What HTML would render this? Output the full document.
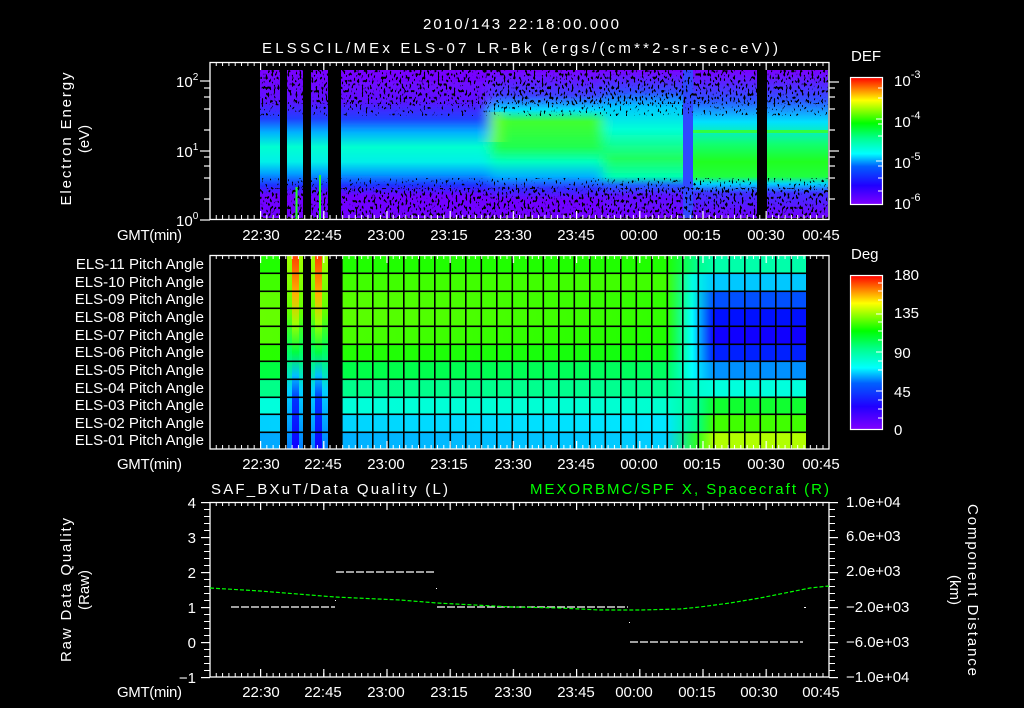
<!DOCTYPE html>
<html><head><meta charset="utf-8"><style>
html,body{margin:0;padding:0;background:#000;}
svg{display:block;}
text{font-family:"Liberation Sans",sans-serif;fill:#fff;font-size:15px;}
</style></head><body>
<svg width="1024" height="708" viewBox="0 0 1024 708" xmlns="http://www.w3.org/2000/svg">
<defs>
<linearGradient id="cb" x1="0" y1="1" x2="0" y2="0">
<stop offset="0" stop-color="#8000ff"/><stop offset="0.15" stop-color="#2000ff"/><stop offset="0.3" stop-color="#0060ff"/><stop offset="0.4" stop-color="#00ffff"/><stop offset="0.52" stop-color="#00ff90"/><stop offset="0.64" stop-color="#00ff00"/><stop offset="0.82" stop-color="#ffff00"/><stop offset="1" stop-color="#ff0000"/>
</linearGradient>
<linearGradient id="gA" gradientUnits="userSpaceOnUse" x1="0" y1="70" x2="0" y2="218">
<stop offset="0" stop-color="#7a00ff"/><stop offset="0.2" stop-color="#6010ff"/><stop offset="0.33" stop-color="#2040ff"/><stop offset="0.42" stop-color="#00b0ff"/><stop offset="0.52" stop-color="#00ffd0"/><stop offset="0.62" stop-color="#00f0e8"/><stop offset="0.7" stop-color="#00a0ff"/><stop offset="0.78" stop-color="#2030ff"/><stop offset="0.85" stop-color="#7000ff"/><stop offset="1" stop-color="#7000ff"/>
</linearGradient>
<linearGradient id="gE" gradientUnits="userSpaceOnUse" x1="0" y1="70" x2="0" y2="218">
<stop offset="0" stop-color="#7a00ff"/><stop offset="0.17" stop-color="#4040ff"/><stop offset="0.27" stop-color="#00e0ff"/><stop offset="0.35" stop-color="#40ff30"/><stop offset="0.52" stop-color="#20ff50"/><stop offset="0.62" stop-color="#00ffc0"/><stop offset="0.72" stop-color="#00b0ff"/><stop offset="0.8" stop-color="#3030ff"/><stop offset="0.88" stop-color="#7000ff"/><stop offset="1" stop-color="#7000ff"/>
</linearGradient>
<linearGradient id="gF" gradientUnits="userSpaceOnUse" x1="0" y1="70" x2="0" y2="218">
<stop offset="0" stop-color="#7a00ff"/><stop offset="0.15" stop-color="#3050ff"/><stop offset="0.25" stop-color="#00c8ff"/><stop offset="0.4" stop-color="#00ffd8"/><stop offset="0.6" stop-color="#20ff60"/><stop offset="0.72" stop-color="#00ffb0"/><stop offset="0.78" stop-color="#2060ff"/><stop offset="0.85" stop-color="#6010ff"/><stop offset="1" stop-color="#7000ff"/>
</linearGradient>
<linearGradient id="gG" gradientUnits="userSpaceOnUse" x1="0" y1="70" x2="0" y2="218">
<stop offset="0" stop-color="#7a00ff"/><stop offset="0.2" stop-color="#3050ff"/><stop offset="0.35" stop-color="#00e0ff"/><stop offset="0.5" stop-color="#10ff70"/><stop offset="0.62" stop-color="#20ff20"/><stop offset="0.72" stop-color="#20ff40"/><stop offset="0.77" stop-color="#00d0ff"/><stop offset="0.83" stop-color="#4030ff"/><stop offset="1" stop-color="#7000ff"/>
</linearGradient>
<filter id="hblur" x="-5%" y="0" width="110%" height="100%"><feGaussianBlur stdDeviation="6 0"/></filter>
<clipPath id="cD"><rect x="341" y="60" width="342" height="160"/></clipPath>
<filter id="spk" x="0" y="0" width="100%" height="100%">
<feTurbulence type="fractalNoise" baseFrequency="0.5 0.3" numOctaves="1" seed="4"/>
<feColorMatrix type="matrix" values="0 0 0 0 0  0 0 0 0 0  0 0 0 0 0  14 0 0 0 -7.9"/>
</filter>
<filter id="spk2" x="0" y="0" width="100%" height="100%">
<feTurbulence type="fractalNoise" baseFrequency="0.5 0.3" numOctaves="1" seed="9"/>
<feColorMatrix type="matrix" values="0 0 0 0 0  0 0 0 0 0  0 0 0 0 0  14 0 0 0 -8.8"/>
</filter>
<pattern id="tmin" x="260" y="0" width="6.32" height="10" patternUnits="userSpaceOnUse"><rect width="1" height="10" fill="#fff"/></pattern>
<pattern id="tmaj" x="260" y="0" width="63.2" height="10" patternUnits="userSpaceOnUse"><rect width="1.2" height="10" fill="#fff"/></pattern>
<pattern id="vmin" x="0" y="502" width="10" height="7" patternUnits="userSpaceOnUse"><rect width="10" height="1" fill="#fff"/></pattern>
<pattern id="vmaj" x="0" y="502" width="12" height="35" patternUnits="userSpaceOnUse"><rect width="12" height="1.2" fill="#fff"/></pattern>
<pattern id="grid" x="341" y="0" width="15.5" height="700" patternUnits="userSpaceOnUse"><rect width="1.6" height="700" fill="#000"/></pattern>
<linearGradient id="r1" gradientUnits="userSpaceOnUse" x1="260" x2="807"><stop offset="0" stop-color="#20ff00"/><stop offset="0.744" stop-color="#20ff00"/><stop offset="0.8" stop-color="#00ff90"/><stop offset="0.83" stop-color="#00ffaa"/><stop offset="1" stop-color="#00ffaa"/></linearGradient>
<linearGradient id="r2" gradientUnits="userSpaceOnUse" x1="260" x2="807"><stop offset="0" stop-color="#40ff00"/><stop offset="0.744" stop-color="#40ff00"/><stop offset="0.79" stop-color="#00ffe0"/><stop offset="0.83" stop-color="#00c8ff"/><stop offset="1" stop-color="#00c8ff"/></linearGradient>
<linearGradient id="r3" gradientUnits="userSpaceOnUse" x1="260" x2="807"><stop offset="0" stop-color="#60ff00"/><stop offset="0.744" stop-color="#30ff00"/><stop offset="0.79" stop-color="#00ffe0"/><stop offset="0.83" stop-color="#0050ff"/><stop offset="1" stop-color="#0050ff"/></linearGradient>
<linearGradient id="r4" gradientUnits="userSpaceOnUse" x1="260" x2="807"><stop offset="0" stop-color="#66ff00"/><stop offset="0.744" stop-color="#30ff00"/><stop offset="0.79" stop-color="#00ffff"/><stop offset="0.83" stop-color="#0010ff"/><stop offset="1" stop-color="#0010ff"/></linearGradient>
<linearGradient id="r5" gradientUnits="userSpaceOnUse" x1="260" x2="807"><stop offset="0" stop-color="#55ff00"/><stop offset="0.744" stop-color="#20ff00"/><stop offset="0.79" stop-color="#00ffff"/><stop offset="0.83" stop-color="#1000ff"/><stop offset="1" stop-color="#1000ff"/></linearGradient>
<linearGradient id="r6" gradientUnits="userSpaceOnUse" x1="260" x2="807"><stop offset="0" stop-color="#28ff00"/><stop offset="0.744" stop-color="#10ff10"/><stop offset="0.79" stop-color="#00ffff"/><stop offset="0.83" stop-color="#0020ff"/><stop offset="1" stop-color="#0020ff"/></linearGradient>
<linearGradient id="r7" gradientUnits="userSpaceOnUse" x1="260" x2="807"><stop offset="0" stop-color="#00ff40"/><stop offset="0.744" stop-color="#00ff60"/><stop offset="0.79" stop-color="#00ffff"/><stop offset="0.83" stop-color="#0090ff"/><stop offset="1" stop-color="#0090ff"/></linearGradient>
<linearGradient id="r8" gradientUnits="userSpaceOnUse" x1="260" x2="807"><stop offset="0" stop-color="#00ff88"/><stop offset="0.744" stop-color="#00ff90"/><stop offset="0.8" stop-color="#00ffd0"/><stop offset="0.83" stop-color="#00ffdd"/><stop offset="1" stop-color="#00ffdd"/></linearGradient>
<linearGradient id="r9" gradientUnits="userSpaceOnUse" x1="260" x2="807"><stop offset="0" stop-color="#00ffdd"/><stop offset="0.744" stop-color="#00ffd0"/><stop offset="0.8" stop-color="#00ff90"/><stop offset="0.83" stop-color="#10ff30"/><stop offset="1" stop-color="#10ff30"/></linearGradient>
<linearGradient id="r10" gradientUnits="userSpaceOnUse" x1="260" x2="807"><stop offset="0" stop-color="#00d0ff"/><stop offset="0.744" stop-color="#00e8ff"/><stop offset="0.8" stop-color="#00ff80"/><stop offset="0.83" stop-color="#40ff00"/><stop offset="1" stop-color="#40ff00"/></linearGradient>
<linearGradient id="r11" gradientUnits="userSpaceOnUse" x1="260" x2="807"><stop offset="0" stop-color="#00a8ff"/><stop offset="0.744" stop-color="#00d0ff"/><stop offset="0.8" stop-color="#30ff20"/><stop offset="0.83" stop-color="#b0ff00"/><stop offset="1" stop-color="#b0ff00"/></linearGradient>
<linearGradient id="colc" gradientUnits="userSpaceOnUse" x1="0" y1="255" x2="0" y2="449"><stop offset="0" stop-color="#ff4000"/><stop offset="0.2" stop-color="#ffb000"/><stop offset="0.35" stop-color="#a0ff00"/><stop offset="0.5" stop-color="#00ff40"/><stop offset="0.62" stop-color="#00c0ff"/><stop offset="0.75" stop-color="#0030ff"/><stop offset="1" stop-color="#1000ff"/></linearGradient>
<linearGradient id="cols" gradientUnits="userSpaceOnUse" x1="0" y1="255" x2="0" y2="449"><stop offset="0" stop-color="#a0ff00"/><stop offset="0.3" stop-color="#60ff00"/><stop offset="0.5" stop-color="#00ff60"/><stop offset="0.7" stop-color="#00d0ff"/><stop offset="1" stop-color="#0080ff"/></linearGradient>
</defs>

<text x="521" y="29" text-anchor="middle" textLength="196">2010/143 22:18:00.000</text>
<text x="262" y="53" textLength="516">ELSSCIL/MEx ELS-07 LR-Bk  (ergs/(cm**2-sr-sec-eV))</text>

<!-- ===== Panel 1 ===== -->
<g>
<rect x="260" y="70" width="20" height="148" fill="url(#gA)"/>
<rect x="287" y="70" width="16" height="148" fill="url(#gA)"/>
<rect x="311" y="70" width="17" height="148" fill="url(#gA)"/>
<g clip-path="url(#cD)"><g filter="url(#hblur)">
<rect x="320" y="70" width="170" height="148" fill="url(#gA)"/>
<rect x="490" y="70" width="113" height="148" fill="url(#gE)"/>
<rect x="603" y="70" width="100" height="148" fill="url(#gF)"/>
<rect x="490" y="112" width="10" height="30" fill="#a0ff20" opacity="0.6"/>
</g></g>
<rect x="683" y="70" width="10" height="148" fill="#3048ff"/>
<rect x="693" y="70" width="64" height="148" fill="url(#gG)"/>
<rect x="767" y="70" width="61" height="148" fill="url(#gG)"/>
<rect x="693" y="130" width="64" height="3" fill="#30ff40"/>
<rect x="767" y="130" width="61" height="3" fill="#30ff40"/>
<rect x="258" y="66" width="572" height="38" filter="url(#spk)"/>
<rect x="258" y="102" width="572" height="14" filter="url(#spk2)"/>
<rect x="258" y="178" width="572" height="12" filter="url(#spk2)"/>
<rect x="258" y="188" width="572" height="32" filter="url(#spk)"/>
<rect x="295.5" y="187" width="2" height="32" fill="#20ff20"/>
<rect x="319" y="175" width="2" height="44" fill="#20ff20"/>
</g>
<rect x="210" y="62.5" width="619" height="157" fill="none" stroke="#fff" stroke-width="1.3"/>
<rect x="210" y="62" width="619" height="4" fill="url(#tmin)"/>
<rect x="210" y="62" width="619" height="8" fill="url(#tmaj)"/>
<rect x="210" y="215" width="619" height="4" fill="url(#tmin)"/>
<rect x="210" y="211" width="619" height="8" fill="url(#tmaj)"/>
<g stroke="#fff" stroke-width="1.2">
<line x1="200" y1="81" x2="210" y2="81"/><line x1="200" y1="151" x2="210" y2="151"/><line x1="200" y1="220" x2="210" y2="220"/>
<line x1="204" y1="88" x2="210" y2="88"/><line x1="204" y1="97" x2="210" y2="97"/><line x1="204" y1="109" x2="210" y2="109"/><line x1="204" y1="130" x2="210" y2="130"/>
<line x1="204" y1="157" x2="210" y2="157"/><line x1="204" y1="166" x2="210" y2="166"/><line x1="204" y1="178" x2="210" y2="178"/><line x1="204" y1="199" x2="210" y2="199"/>
<line x1="829" y1="82" x2="839" y2="82"/><line x1="829" y1="151" x2="839" y2="151"/>
<line x1="829" y1="88" x2="835" y2="88"/><line x1="829" y1="97" x2="835" y2="97"/><line x1="829" y1="109" x2="835" y2="109"/><line x1="829" y1="130" x2="835" y2="130"/>
<line x1="829" y1="157" x2="835" y2="157"/><line x1="829" y1="166" x2="835" y2="166"/><line x1="829" y1="178" x2="835" y2="178"/><line x1="829" y1="199" x2="835" y2="199"/>
</g>
<text x="176" y="87">10<tspan font-size="10" dy="-7">2</tspan></text>
<text x="176" y="157">10<tspan font-size="10" dy="-7">1</tspan></text>
<text x="176" y="226">10<tspan font-size="10" dy="-7">0</tspan></text>
<text transform="translate(71,139) rotate(-90)" text-anchor="middle" textLength="133">Electron Energy</text>
<text transform="translate(89,139) rotate(-90)" text-anchor="middle">(eV)</text>
<text x="117" y="240" textLength="65">GMT(min)</text>
<g text-anchor="middle">
<text x="261" y="240">22:30</text><text x="323" y="240">22:45</text><text x="386" y="240">23:00</text><text x="449" y="240">23:15</text><text x="513" y="240">23:30</text><text x="576" y="240">23:45</text><text x="639" y="240">00:00</text><text x="702" y="240">00:15</text><text x="766" y="240">00:30</text><text x="821" y="240">00:45</text>
</g>
<text x="851" y="61" font-size="16">DEF</text>
<rect x="850.5" y="77.5" width="32" height="127" fill="url(#cb)" stroke="#fff" stroke-width="1.2"/>
<g stroke="#fff" stroke-width="1"><line x1="878" y1="88" x2="882" y2="88"/><line x1="878" y1="98" x2="882" y2="98"/><line x1="876" y1="119" x2="882" y2="119"/><line x1="878" y1="124" x2="882" y2="124"/><line x1="878" y1="136" x2="882" y2="136"/><line x1="876" y1="161" x2="882" y2="161"/><line x1="878" y1="166" x2="882" y2="166"/><line x1="878" y1="178" x2="882" y2="178"/><line x1="878" y1="191" x2="882" y2="191"/></g>
<text x="894" y="86" font-size="16">10<tspan font-size="11" dy="-8">-3</tspan></text>
<text x="894" y="127" font-size="16">10<tspan font-size="11" dy="-8">-4</tspan></text>
<text x="894" y="168" font-size="16">10<tspan font-size="11" dy="-8">-5</tspan></text>
<text x="894" y="209" font-size="16">10<tspan font-size="11" dy="-8">-6</tspan></text>

<!-- ===== Panel 2 ===== -->
<rect x="260" y="255" width="547" height="18" fill="url(#r1)"/>
<rect x="260" y="273" width="547" height="18" fill="url(#r2)"/>
<rect x="260" y="291" width="547" height="17" fill="url(#r3)"/>
<rect x="260" y="308" width="547" height="18" fill="url(#r4)"/>
<rect x="260" y="326" width="547" height="18" fill="url(#r5)"/>
<rect x="260" y="344" width="547" height="17" fill="url(#r6)"/>
<rect x="260" y="361" width="547" height="18" fill="url(#r7)"/>
<rect x="260" y="379" width="547" height="18" fill="url(#r8)"/>
<rect x="260" y="397" width="547" height="17" fill="url(#r9)"/>
<rect x="260" y="414" width="547" height="18" fill="url(#r10)"/>
<rect x="260" y="432" width="547" height="17" fill="url(#r11)"/>
<rect x="280" y="255" width="7" height="194" fill="#000"/>
<rect x="303" y="255" width="8" height="194" fill="#000"/>
<rect x="328" y="255" width="13" height="194" fill="#000"/>
<rect x="287" y="255" width="16" height="194" fill="url(#cols)"/>
<rect x="292" y="255" width="7" height="194" fill="url(#colc)"/>
<rect x="311" y="255" width="17" height="194" fill="url(#cols)"/>
<rect x="315" y="255" width="7" height="194" fill="url(#colc)"/>
<rect x="340" y="255" width="468" height="194" fill="url(#grid)"/>
<g fill="#000"><rect x="260" y="272.5" width="547" height="1.6"/><rect x="260" y="290.5" width="547" height="1.6"/><rect x="260" y="307.5" width="547" height="1.6"/><rect x="260" y="325.5" width="547" height="1.6"/><rect x="260" y="343.5" width="547" height="1.6"/><rect x="260" y="360.5" width="547" height="1.6"/><rect x="260" y="378.5" width="547" height="1.6"/><rect x="260" y="396.5" width="547" height="1.6"/><rect x="260" y="413.5" width="547" height="1.6"/><rect x="260" y="431.5" width="547" height="1.6"/></g>
<rect x="210" y="255.5" width="619" height="193.5" fill="none" stroke="#fff" stroke-width="1.3"/>
<rect x="210" y="255" width="619" height="4" fill="url(#tmin)"/>
<rect x="210" y="255" width="619" height="8" fill="url(#tmaj)"/>
<rect x="210" y="445" width="619" height="4" fill="url(#tmin)"/>
<rect x="210" y="441" width="619" height="8" fill="url(#tmaj)"/>
<g font-size="13" text-anchor="end">
<text x="204" y="269">ELS-11 Pitch Angle</text><text x="204" y="287">ELS-10 Pitch Angle</text><text x="204" y="304">ELS-09 Pitch Angle</text><text x="204" y="322">ELS-08 Pitch Angle</text><text x="204" y="340">ELS-07 Pitch Angle</text><text x="204" y="357">ELS-06 Pitch Angle</text><text x="204" y="375">ELS-05 Pitch Angle</text><text x="204" y="393">ELS-04 Pitch Angle</text><text x="204" y="410">ELS-03 Pitch Angle</text><text x="204" y="428">ELS-02 Pitch Angle</text><text x="204" y="445">ELS-01 Pitch Angle</text>
</g>
<text x="117" y="469" textLength="65">GMT(min)</text>
<g text-anchor="middle">
<text x="261" y="469">22:30</text><text x="323" y="469">22:45</text><text x="386" y="469">23:00</text><text x="449" y="469">23:15</text><text x="513" y="469">23:30</text><text x="576" y="469">23:45</text><text x="639" y="469">00:00</text><text x="702" y="469">00:15</text><text x="766" y="469">00:30</text><text x="821" y="469">00:45</text>
</g>
<text x="851" y="259" font-size="16">Deg</text>
<rect x="850.5" y="275.5" width="32" height="154" fill="url(#cb)" stroke="#fff" stroke-width="1.2"/>
<g stroke="#fff" stroke-width="1"><line x1="878" y1="283" x2="882" y2="283"/><line x1="878" y1="291" x2="882" y2="291"/><line x1="878" y1="300" x2="882" y2="300"/><line x1="876" y1="314" x2="882" y2="314"/><line x1="878" y1="322" x2="882" y2="322"/><line x1="878" y1="331" x2="882" y2="331"/><line x1="878" y1="340" x2="882" y2="340"/><line x1="876" y1="352" x2="882" y2="352"/><line x1="878" y1="361" x2="882" y2="361"/><line x1="878" y1="370" x2="882" y2="370"/><line x1="876" y1="391" x2="882" y2="391"/><line x1="878" y1="400" x2="882" y2="400"/><line x1="878" y1="409" x2="882" y2="409"/><line x1="878" y1="418" x2="882" y2="418"/></g>
<g font-size="16"><text x="894" y="280">180</text><text x="894" y="318">135</text><text x="894" y="358">90</text><text x="894" y="397">45</text><text x="894" y="435">0</text></g>

<!-- ===== Panel 3 ===== -->
<text x="211" y="494" textLength="237">SAF_BXuT/Data Quality (L)</text>
<text x="530" y="494" textLength="299" style="fill:#00ff00">MEXORBMC/SPF X, Spacecraft (R)</text>
<rect x="210" y="502.5" width="619" height="174.5" fill="none" stroke="#fff" stroke-width="1.3"/>
<rect x="210" y="502" width="619" height="4" fill="url(#tmin)"/>
<rect x="210" y="502" width="619" height="8" fill="url(#tmaj)"/>
<rect x="210" y="673" width="619" height="4" fill="url(#tmin)"/>
<rect x="210" y="669" width="619" height="8" fill="url(#tmaj)"/>
<rect x="204" y="502" width="6" height="176" fill="url(#vmin)"/>
<rect x="201" y="502" width="9" height="177" fill="url(#vmaj)"/>
<rect x="829" y="502" width="6" height="176" fill="url(#vmin)"/>
<rect x="829" y="502" width="9" height="177" fill="url(#vmaj)"/>
<g stroke="#fff" stroke-width="1.2" stroke-dasharray="8 2">
<line x1="231" y1="607" x2="335" y2="607"/><line x1="336" y1="572" x2="435" y2="572"/><line x1="437" y1="607" x2="628" y2="607"/><line x1="630" y1="642" x2="803" y2="642"/>
</g>
<rect x="335" y="600" width="1" height="1" fill="#fff"/><rect x="436" y="588" width="1" height="1" fill="#fff"/><rect x="629" y="622" width="1" height="1" fill="#fff"/><rect x="804" y="607" width="2" height="1" fill="#fff"/>
<polyline points="210,588 260,591 335,597 400,600 437,603 512,607 560,608 600,610 640,610 680,609 700,607 730,603 760,598 790,592 810,588 829,586" fill="none" stroke="#00ff00" stroke-width="1.2" stroke-dasharray="4 2"/>
<g text-anchor="end" font-size="15"><text x="196" y="508">4</text><text x="196" y="543">3</text><text x="196" y="578">2</text><text x="196" y="613">1</text><text x="196" y="648">0</text><text x="196" y="683">−1</text></g>
<g font-size="14"><text x="846" y="507">1.0e+04</text><text x="846" y="541">6.0e+03</text><text x="846" y="576">2.0e+03</text><text x="846" y="612">−2.0e+03</text><text x="846" y="647">−6.0e+03</text><text x="846" y="682">−1.0e+04</text></g>
<text transform="translate(71,590) rotate(-90)" text-anchor="middle" textLength="144">Raw Data Quality</text>
<text transform="translate(89,590) rotate(-90)" text-anchor="middle">(Raw)</text>
<text transform="translate(968,590) rotate(90)" text-anchor="middle" textLength="172">Component Distance</text>
<text transform="translate(950,590) rotate(90)" text-anchor="middle">(km)</text>
<text x="117" y="697" textLength="65">GMT(min)</text>
<g text-anchor="middle">
<text x="261" y="697">22:30</text><text x="323" y="697">22:45</text><text x="386" y="697">23:00</text><text x="449" y="697">23:15</text><text x="513" y="697">23:30</text><text x="576" y="697">23:45</text><text x="634" y="697">00:00</text><text x="697" y="697">00:15</text><text x="759" y="697">00:30</text><text x="821" y="697">00:45</text>
</g>
</svg>
</body></html>
